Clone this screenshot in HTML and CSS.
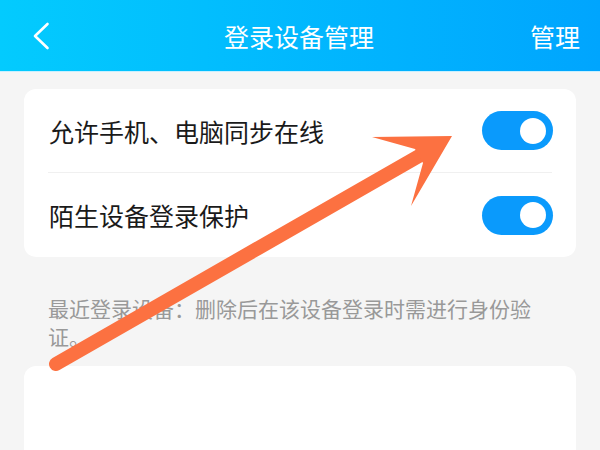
FILE: index.html
```html
<!DOCTYPE html>
<html lang="zh-CN">
<head>
<meta charset="utf-8">
<title>登录设备管理</title>
<link rel="stylesheet" href="styles.css">
</head>
<body>
<div class="page">
  <header class="topbar">
    <div class="topbar-left">
      <svg class="back" width="18" height="28" viewBox="0 0 18 28">
        <polyline points="15.5,2 3,14 15.5,26" fill="none" stroke="#ffffff" stroke-width="2.6" stroke-linecap="round" stroke-linejoin="round"/>
      </svg>
    </div>
    <div class="topbar-title">登录设备管理</div>
    <div class="topbar-right">管理</div>
  </header>

  <section class="card settings">
    <div class="row">
      <span class="row-label">允许手机、电脑同步在线</span>
      <span class="toggle on"><span class="knob"></span></span>
    </div>
    <div class="row">
      <span class="row-label">陌生设备登录保护</span>
      <span class="toggle on"><span class="knob"></span></span>
    </div>
  </section>

  <p class="note">最近登录设备：删除后在该设备登录时需进行身份验证。</p>

  <section class="card devices"></section>

  <svg class="annotation" width="600" height="450" viewBox="0 0 600 450">
    <line x1="56" y1="364" x2="419" y2="156" stroke="#fc7141" stroke-width="14" stroke-linecap="round"/>
    <polygon points="452,136 372,137 415,149 423,163 411,206" fill="#fc7141"/>
  </svg>
</div>
</body>
</html>
```

FILE: styles.css
```css
html, body {
  margin: 0;
  padding: 0;
}

body {
  background: #f5f5f5;
  font-family: "Noto Sans CJK SC", "Noto Sans", sans-serif;
}

.page {
  position: relative;
  width: 600px;
  height: 450px;
  overflow: hidden;
  background: #f5f5f5;
}

.topbar {
  height: 71px;
  border-bottom: 1px solid #c8f0ff;
  background: linear-gradient(to right, #03cbfe, #00a5fe);
  display: grid;
  grid-template-columns: 1fr auto 1fr;
  align-items: center;
  padding: 0 20px;
  color: #ffffff;
  font-size: 25px;
  line-height: 30px;
}

.topbar-left {
  display: flex;
  align-items: center;
  padding-left: 12px;
}

.back {
  display: block;
}

.topbar-title {
  text-align: center;
  margin-left: -2px;
}

.topbar-right {
  text-align: right;
}

.card {
  background: #ffffff;
  border-radius: 12px;
  margin: 0 24px;
}

.settings {
  margin-top: 17px;
  padding: 0 24px;
}

.row {
  height: 84px;
  display: flex;
  align-items: center;
  justify-content: space-between;
  border-bottom: 1px solid #f0f0f0;
  box-sizing: border-box;
}

.row:last-child {
  border-bottom: none;
}

.row-label {
  font-size: 25px;
  color: #1a1a1a;
  line-height: 30px;
  padding-left: 1px;
}

.toggle {
  width: 71px;
  height: 39px;
  border-radius: 20px;
  background: #0a9afc;
  display: flex;
  align-items: center;
  justify-content: flex-end;
  padding-right: 7px;
  box-sizing: border-box;
  margin-right: -1px;
}

.knob {
  width: 26px;
  height: 26px;
  border-radius: 50%;
  background: #ffffff;
}

.note {
  margin: 37px 0 0 0;
  padding: 0 56px 0 48px;
  font-size: 21px;
  line-height: 28px;
  color: #999999;
}

.devices {
  margin-top: 16px;
  height: 200px;
}

.annotation {
  position: absolute;
  left: 0;
  top: 0;
  pointer-events: none;
}
```
